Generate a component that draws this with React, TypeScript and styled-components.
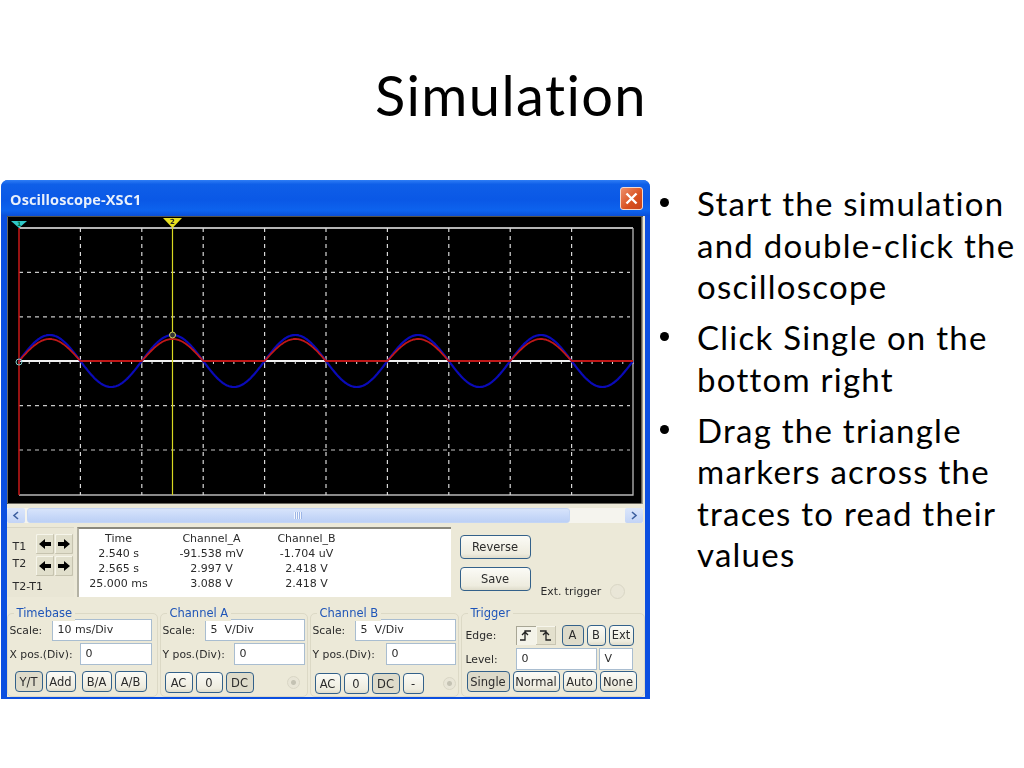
import React from "react";
import styled, { createGlobalStyle } from "styled-components";

const GlobalStyle = createGlobalStyle`
  html, body {
    margin: 0;
    padding: 0;
    background: #ffffff;
  }
`;

const Slide = styled.div`
  width: 1024px;
  height: 768px;
  overflow: hidden;
  background: #ffffff;
  font-family: Lato, "Open Sans", sans-serif;
  font-variant-ligatures: none;
  color: #000000;
`;

const Title = styled.h1`
  margin: 0;
  height: 180px;
  padding: 8px 2px 0 0;
  box-sizing: border-box;
  display: flex;
  align-items: center;
  justify-content: center;
  font-size: 56px;
  font-weight: 400;
  letter-spacing: 1.4px;
`;

const Content = styled.div`
  display: flex;
  align-items: flex-start;
  padding-left: 1px;
`;

const Bullets = styled.ul`
  list-style: none;
  margin: 3px 0 0 9px;
  padding: 0;
  display: flex;
  flex-direction: column;
  gap: 9.5px;
`;

const Bullet = styled.li`
  display: grid;
  grid-template-columns: 38px auto;
  font-size: 33px;
  letter-spacing: 1.25px;
  line-height: 41.5px;
  white-space: nowrap;
  &::before {
    content: "";
    width: 9px;
    height: 9px;
    margin: 15px 0 0 1px;
    border-radius: 50%;
    background: #000000;
  }
`;

const Lines = styled.span`
  display: block;
`;

const Line = styled.span`
  display: block;
`;

/* oscilloscope window */
const Window = styled.div`
  width: 649px;
  height: 519px;
  box-sizing: border-box;
  flex: none;
  display: flex;
  flex-direction: column;
  border-radius: 7px 7px 0 0;
  background: #0b4fe0;
  padding: 0 5px 4px 5.5px;
  font-family: "DejaVu Sans", sans-serif;
  font-size: 10.8px;
  color: #2b2b2b;
  filter: blur(0.35px);
`;

const TitleBar = styled.div`
  height: 36px;
  flex: none;
  margin: 0 -5px 0 -5.5px;
  padding: 0 7px 0 9px;
  display: flex;
  align-items: center;
  justify-content: space-between;
  border-radius: 7px 7px 0 0;
  background: linear-gradient(#2f7df5 0%, #0f5fe8 12%, #0a58e6 55%, #0d63ee 85%, #0a50d8 100%);
`;

const WindowName = styled.span`
  font-family: "Open Sans", sans-serif;
  font-weight: 700;
  font-size: 14.5px;
  color: #e8f0fb;
  letter-spacing: 0.1px;
  padding-top: 2px;
`;

const CloseButton = styled.button`
  width: 23px;
  height: 23px;
  padding: 0;
  display: flex;
  align-items: center;
  justify-content: center;
  border: 1px solid #f3d8cc;
  border-radius: 3px;
  background: linear-gradient(135deg, #ee8f6a, #d8501f 60%, #c8431c);
`;

const Body = styled.div`
  flex: 1;
  display: flex;
  flex-direction: column;
  background: #ece9d8;
`;

const Screen = styled.div`
  height: 288px;
  flex: none;
  margin-right: 2.5px;
  background: #000000;
  border-top: 1px solid #55534c;
  box-sizing: border-box;
  display: flex;
`;

const ScopeSvg = styled.svg`
  display: block;
  width: 100%;
  height: 100%;
`;

const ScrollBar = styled.div`
  height: 15px;
  margin: 4px 2px 0 0;
  display: flex;
  background: #f5f4ee;
`;

const ScrollButton = styled.div`
  width: 18px;
  flex: none;
  display: flex;
  align-items: center;
  justify-content: center;
  border-radius: 2px;
  background: linear-gradient(#dbe6fb, #c3d4f6);
`;

const ScrollThumb = styled.div`
  width: 543px;
  flex: none;
  margin-left: 2px;
  display: flex;
  align-items: center;
  justify-content: center;
  border-radius: 3px;
  border: 1px solid #c3d5f5;
  box-sizing: border-box;
  background: linear-gradient(#d7e4fb, #c6d7f8 60%, #bcd0f5);
`;

const ScrollGrip = styled.div`
  width: 8px;
  height: 7px;
  background: repeating-linear-gradient(90deg, #f2f6fe 0 1px, #9db6e6 1px 2px);
`;

const ScrollTrack = styled.div`
  flex: 1;
`;

const Readout = styled.div`
  height: 70px;
  margin-top: 4px;
  display: flex;
`;

const CursorBox = styled.div`
  width: 67px;
  flex: none;
  box-sizing: border-box;
  padding: 6px 0 0 6px;
  display: grid;
  grid-template-columns: 22px 18px 18px;
  grid-template-rows: 20px 20px 1fr;
  column-gap: 1px;
  row-gap: 2px;
  align-items: center;
  border-top: 1px solid #d8d5c4;
  background: #e9e6d5;
`;

const CursorLabel = styled.span<{ $down?: number; $up?: number }>`
  font-size: 11px;
  margin-top: ${(p) => p.$down ?? 0}px;
  margin-bottom: ${(p) => p.$up ?? 0}px;
`;

const CursorDelta = styled.span`
  grid-column: 1 / -1;
  font-size: 11px;
  padding-bottom: 2px;
`;

const ArrowButton = styled.button`
  padding: 0;
  width: 18px;
  height: 20px;
  display: flex;
  align-items: center;
  justify-content: center;
  border: 0;
  border-radius: 1px;
  background: #e1dfcc;
  box-shadow: inset -1px -1px 0 #c6c3af, inset 1px 1px 0 #f6f5ea;
`;

const ReadoutTable = styled.div`
  width: 374px;
  flex: none;
  margin-left: 3px;
  box-sizing: border-box;
  padding: 2px 0 0 0;
  display: grid;
  grid-template-columns: 80px 106px 84px;
  grid-auto-rows: 15px;
  align-items: center;
  justify-items: center;
  background: #ffffff;
  border-top: 2px solid #8a887c;
  border-left: 2px solid #b4b2a4;
  font-size: 11px;
  line-height: 15px;
`;

const SideActions = styled.div`
  flex: 1;
  display: flex;
  padding-left: 9px;
`;

const SideButtons = styled.div`
  display: flex;
  flex-direction: column;
  gap: 8px;
  padding-top: 8px;
`;

const ExtTrigger = styled.div`
  margin: 56px 0 0 10px;
  display: flex;
  align-items: center;
  gap: 9px;
  height: 16px;
`;

const Controls = styled.div`
  margin-top: 16px;
  display: grid;
  grid-template-columns: 151px 148px 149px 184px;
  column-gap: 2px;
`;

const Group = styled.div<{ $right?: number }>`
  position: relative;
  height: 84px;
  box-sizing: border-box;
  padding: 4px ${(p) => p.$right ?? 5}px 0 2px;
  display: flex;
  flex-direction: column;
  border: 1px solid #dcd9c6;
  border-radius: 5px;
`;

const Legend = styled.span`
  position: absolute;
  top: -8px;
  left: 6px;
  padding: 0 3px;
  background: #ece9d8;
  color: #1f55b8;
  font-size: 11.5px;
  line-height: 15px;
`;

const FieldRow = styled.div`
  height: 24px;
  flex: none;
  display: flex;
  align-items: center;
  justify-content: space-between;
`;

const FieldInput = styled.div<{ $w: number }>`
  width: ${(p) => p.$w}px;
  height: 22px;
  flex: none;
  box-sizing: border-box;
  padding: 0 0 2px 5px;
  display: flex;
  align-items: center;
  background: #ffffff;
  border: 1px solid #a9bdd0;
  font-size: 11px;
`;

const ButtonRow = styled.div<{ $pad: number; $top: number }>`
  display: flex;
  align-items: center;
  gap: 3px;
  padding-left: ${(p) => p.$pad}px;
  margin-top: ${(p) => p.$top}px;
`;

const Button = styled.button<{ $w: number; $h?: number; $on?: boolean; $after?: number }>`
  width: ${(p) => p.$w}px;
  height: ${(p) => p.$h ?? 21}px;
  flex: none;
  margin-right: ${(p) => p.$after ?? 0}px;
  padding: 0;
  border: 1px solid #33618a;
  border-radius: 4px;
  font-family: inherit;
  font-size: 11.5px;
  color: #2b2b2b;
  background: ${(p) => (p.$on ? "#dedbca" : "linear-gradient(#fbfbf6, #eeecdf 80%, #dfdccb)")};
`;

const Radio = styled.span<{ $dot?: boolean; $left?: number; $size?: number }>`
  width: ${(p) => p.$size ?? 13}px;
  height: ${(p) => p.$size ?? 13}px;
  flex: none;
  margin-left: ${(p) => p.$left ?? 0}px;
  box-sizing: border-box;
  display: block;
  border-radius: 50%;
  border: 1px solid #d9d6c5;
  background: ${(p) =>
    p.$dot ? "radial-gradient(circle, #c4c2b3 0 2px, #e8e5d6 3px)" : "#e9e6d7"};
`;

const EdgeToggle = styled.div`
  display: flex;
  margin-right: 3px;
`;

const EdgeButton = styled.span<{ $on?: boolean }>`
  width: 20px;
  height: 19px;
  display: flex;
  align-items: center;
  justify-content: center;
  background: ${(p) => (p.$on ? "#f4f3e9" : "#e3e0cd")};
  box-shadow: ${(p) =>
    p.$on
      ? "inset 1px 1px 0 #a8a695"
      : "inset -1px -1px 0 #c8c5b2, inset 1px 1px 0 #f7f6ec"};
`;

const TriggerRows = styled.div`
  margin-top: 5px;
`;

const TriggerRow = styled.div`
  height: 24px;
  display: flex;
  align-items: center;
`;

const TriggerLabel = styled.span`
  width: 52px;
  flex: none;
  padding-left: 2px;
  box-sizing: border-box;
`;

const LevelGroup = styled.div`
  display: flex;
  gap: 2px;
`;

const Arrow = ({ right }: { right?: boolean }) => (
  <svg width="14" height="12" viewBox="0 0 14 12">
    <path
      d="M1 6 L7 1 V4 H13 V8 H7 V11 Z"
      fill="#000"
      transform={right ? "translate(14 0) scale(-1 1)" : undefined}
    />
  </svg>
);

const EdgeIcon = ({ falling }: { falling?: boolean }) => (
  <svg width="13" height="13" viewBox="0 0 13 13">
    <path
      d={falling ? "M1 2 H7 V11 H12 M4 6 L7 3 L10 6" : "M1 11 H6 V2 H12 M3 6 L6 3 L9 6"}
      fill="none"
      stroke="#222"
      strokeWidth="1.3"
    />
  </svg>
);

const left = 19;
const right = 633;
const top = 228;
const bottom = 495;
const mid = 361;
const div = 61.4;
const rowDiv = 44.4;

const wave = (fn: (x: number) => number) => {
  const pts: string[] = [];
  for (let x = left; x <= right; x += 1) {
    pts.push(`${x},${fn(x).toFixed(1)}`);
  }
  return pts.join(" ");
};

const blueAt = (x: number) => mid - 26 * Math.sin(((x - left) / (div * 2)) * Math.PI * 2);
const redAt = (x: number) => {
  const s = Math.sin(((x - left) / (div * 2)) * Math.PI * 2);
  return s > 0 ? mid - 22 * s : mid;
};

const Scope = () => {
  const vLines = Array.from({ length: 9 }, (_, i) => left + div * (i + 1));
  const hLines = [1, 2, 4, 5].map((i) => top + rowDiv * i);
  const ticks = Array.from({ length: 61 }, (_, i) => left + (div / 6) * i);
  return (
    <ScopeSvg viewBox="7 217 636 287" preserveAspectRatio="none">
      <rect x="7" y="217" width="636" height="287" fill="#000" />
      <path d="M7.5 217 V503.5 H642" fill="none" stroke="#6a6860" strokeWidth="1" />
      <path d="M642.2 217 V504" stroke="#a5a396" strokeWidth="1.5" />
      <path d={`M${left} ${top} H${right}`} fill="none" stroke="#f2f2f2" strokeWidth="1.3" />
      <path d={`M${right} ${top} V${bottom} H${left}`} fill="none" stroke="#b8b8b8" strokeWidth="1.3" />
      {vLines.map((x) => (
        <line key={x} x1={x} x2={x} y1={top} y2={bottom} stroke="#d8d8d8" strokeWidth="1.2" strokeDasharray="4 4" />
      ))}
      {hLines.map((y) => (
        <line key={y} x1={left} x2={right - 3} y1={y} y2={y} stroke="#c8c8c8" strokeWidth="1.2" strokeDasharray="4 4" />
      ))}
      <line x1={left} x2={right} y1={mid} y2={mid} stroke="#f0f0f0" strokeWidth="2" />
      {ticks.map((x) => (
        <line key={x} x1={x} x2={x} y1={mid} y2={mid + 3} stroke="#e8e8e8" strokeWidth="1" />
      ))}
      <line x1={left} x2={left} y1={top} y2={bottom} stroke="#c81818" strokeWidth="1.5" />
      <line x1="172.5" x2="172.5" y1={top} y2={bottom} stroke="#d8d820" strokeWidth="1.2" />
      <polyline points={wave(blueAt)} fill="none" stroke="#0a0ab8" strokeWidth="2.2" />
      <polyline points={wave(redAt)} fill="none" stroke="#c01818" strokeWidth="1.8" />
      <path d="M11 221 H27 L19 228 Z" fill="#30c8c8" />
      <path d="M163 218 H182 L172.5 228 Z" fill="#e8e020" />
      <text x="19" y="226" fontSize="6" fontWeight="700" textAnchor="middle" fill="#063">1</text>
      <text x="172.5" y="224" fontSize="7" fontWeight="700" textAnchor="middle" fill="#222">2</text>
      <circle cx="19" cy="362" r="3" fill="none" stroke="#7fd0d0" strokeWidth="1" />
      <circle cx="172.5" cy="335" r="3" fill="#333" stroke="#d8d860" strokeWidth="1" />
    </ScopeSvg>
  );
};

const readings = [
  ["Time", "Channel_A", "Channel_B"],
  ["2.540 s", "-91.538 mV", "-1.704 uV"],
  ["2.565 s", "2.997 V", "2.418 V"],
  ["25.000 ms", "3.088 V", "2.418 V"],
];

export default function App() {
  return (
    <Slide>
      <GlobalStyle />
      <Title>Simulation</Title>
      <Content>
        <Window>
          <TitleBar>
            <WindowName>Oscilloscope-XSC1</WindowName>
            <CloseButton aria-label="Close">
              <svg width="15" height="15" viewBox="0 0 15 15">
                <path d="M2.5 2.5 L12.5 12.5 M12.5 2.5 L2.5 12.5" stroke="#fff" strokeWidth="2.4" />
              </svg>
            </CloseButton>
          </TitleBar>
          <Body>
            <Screen>
              <Scope />
            </Screen>
            <ScrollBar>
              <ScrollButton>
                <svg width="8" height="9" viewBox="0 0 8 9">
                  <path d="M6 1 L2 4.5 L6 8" fill="none" stroke="#3d5f9f" strokeWidth="1.6" />
                </svg>
              </ScrollButton>
              <ScrollThumb>
                <ScrollGrip />
              </ScrollThumb>
              <ScrollTrack />
              <ScrollButton>
                <svg width="8" height="9" viewBox="0 0 8 9">
                  <path d="M2 1 L6 4.5 L2 8" fill="none" stroke="#3d5f9f" strokeWidth="1.6" />
                </svg>
              </ScrollButton>
            </ScrollBar>
            <Readout>
              <CursorBox>
                <CursorLabel $down={4}>T1</CursorLabel>
                <ArrowButton aria-label="T1 left"><Arrow /></ArrowButton>
                <ArrowButton aria-label="T1 right"><Arrow right /></ArrowButton>
                <CursorLabel $up={6}>T2</CursorLabel>
                <ArrowButton aria-label="T2 left"><Arrow /></ArrowButton>
                <ArrowButton aria-label="T2 right"><Arrow right /></ArrowButton>
                <CursorDelta>T2-T1</CursorDelta>
              </CursorBox>
              <ReadoutTable>
                {readings.flat().map((cell, i) => (
                  <span key={i}>{cell}</span>
                ))}
              </ReadoutTable>
              <SideActions>
                <SideButtons>
                  <Button $w={71} $h={24}>Reverse</Button>
                  <Button $w={71} $h={24}>Save</Button>
                </SideButtons>
                <ExtTrigger>
                  Ext. trigger
                  <Radio $size={15} />
                </ExtTrigger>
              </SideActions>
            </Readout>
            <Controls>
              <Group>
                <Legend>Timebase</Legend>
                <FieldRow>
                  Scale:
                  <FieldInput $w={100}>10 ms/Div</FieldInput>
                </FieldRow>
                <FieldRow>
                  X pos.(Div):
                  <FieldInput $w={72}>0</FieldInput>
                </FieldRow>
                <ButtonRow $pad={5} $top={5}>
                  <Button $w={28} $on>Y/T</Button>
                  <Button $w={30} $after={3}>Add</Button>
                  <Button $w={30}>B/A</Button>
                  <Button $w={32}>A/B</Button>
                </ButtonRow>
              </Group>
              <Group $right={2}>
                <Legend>Channel A</Legend>
                <FieldRow>
                  Scale:
                  <FieldInput $w={100}>5&nbsp; V/Div</FieldInput>
                </FieldRow>
                <FieldRow>
                  Y pos.(Div):
                  <FieldInput $w={71}>0</FieldInput>
                </FieldRow>
                <ButtonRow $pad={2} $top={6}>
                  <Button $w={28}>AC</Button>
                  <Button $w={27}>0</Button>
                  <Button $w={28} $on>DC</Button>
                  <Radio $dot $left={30} />
                </ButtonRow>
              </Group>
              <Group $right={2}>
                <Legend>Channel B</Legend>
                <FieldRow>
                  Scale:
                  <FieldInput $w={101}>5&nbsp; V/Div</FieldInput>
                </FieldRow>
                <FieldRow>
                  Y pos.(Div):
                  <FieldInput $w={70}>0</FieldInput>
                </FieldRow>
                <ButtonRow $pad={2} $top={7}>
                  <Button $w={26}>AC</Button>
                  <Button $w={25}>0</Button>
                  <Button $w={28} $on>DC</Button>
                  <Button $w={21}>-</Button>
                  <Radio $dot $left={16} />
                </ButtonRow>
              </Group>
              <Group>
                <Legend>Trigger</Legend>
                <TriggerRows>
                  <TriggerRow>
                    <TriggerLabel>Edge:</TriggerLabel>
                    <EdgeToggle>
                      <EdgeButton $on><EdgeIcon /></EdgeButton>
                      <EdgeButton><EdgeIcon falling /></EdgeButton>
                    </EdgeToggle>
                    <ButtonRow $pad={3} $top={0}>
                      <Button $w={22} $on>A</Button>
                      <Button $w={19}>B</Button>
                      <Button $w={25}>Ext</Button>
                    </ButtonRow>
                  </TriggerRow>
                  <TriggerRow>
                    <TriggerLabel>Level:</TriggerLabel>
                    <LevelGroup>
                      <FieldInput $w={81}>0</FieldInput>
                      <FieldInput $w={34}>V</FieldInput>
                    </LevelGroup>
                  </TriggerRow>
                </TriggerRows>
                <ButtonRow $pad={3} $top={0}>
                  <Button $w={43} $on>Single</Button>
                  <Button $w={47}>Normal</Button>
                  <Button $w={34}>Auto</Button>
                  <Button $w={37}>None</Button>
                </ButtonRow>
              </Group>
            </Controls>
          </Body>
        </Window>
        <Bullets>
          <Bullet>
            <Lines>
              <Line>Start the simulation</Line>
              <Line>and double-click the</Line>
              <Line>oscilloscope</Line>
            </Lines>
          </Bullet>
          <Bullet>
            <Lines>
              <Line>Click Single on the</Line>
              <Line>bottom right</Line>
            </Lines>
          </Bullet>
          <Bullet>
            <Lines>
              <Line>Drag the triangle</Line>
              <Line>markers across the</Line>
              <Line>traces to read their</Line>
              <Line>values</Line>
            </Lines>
          </Bullet>
        </Bullets>
      </Content>
    </Slide>
  );
}
